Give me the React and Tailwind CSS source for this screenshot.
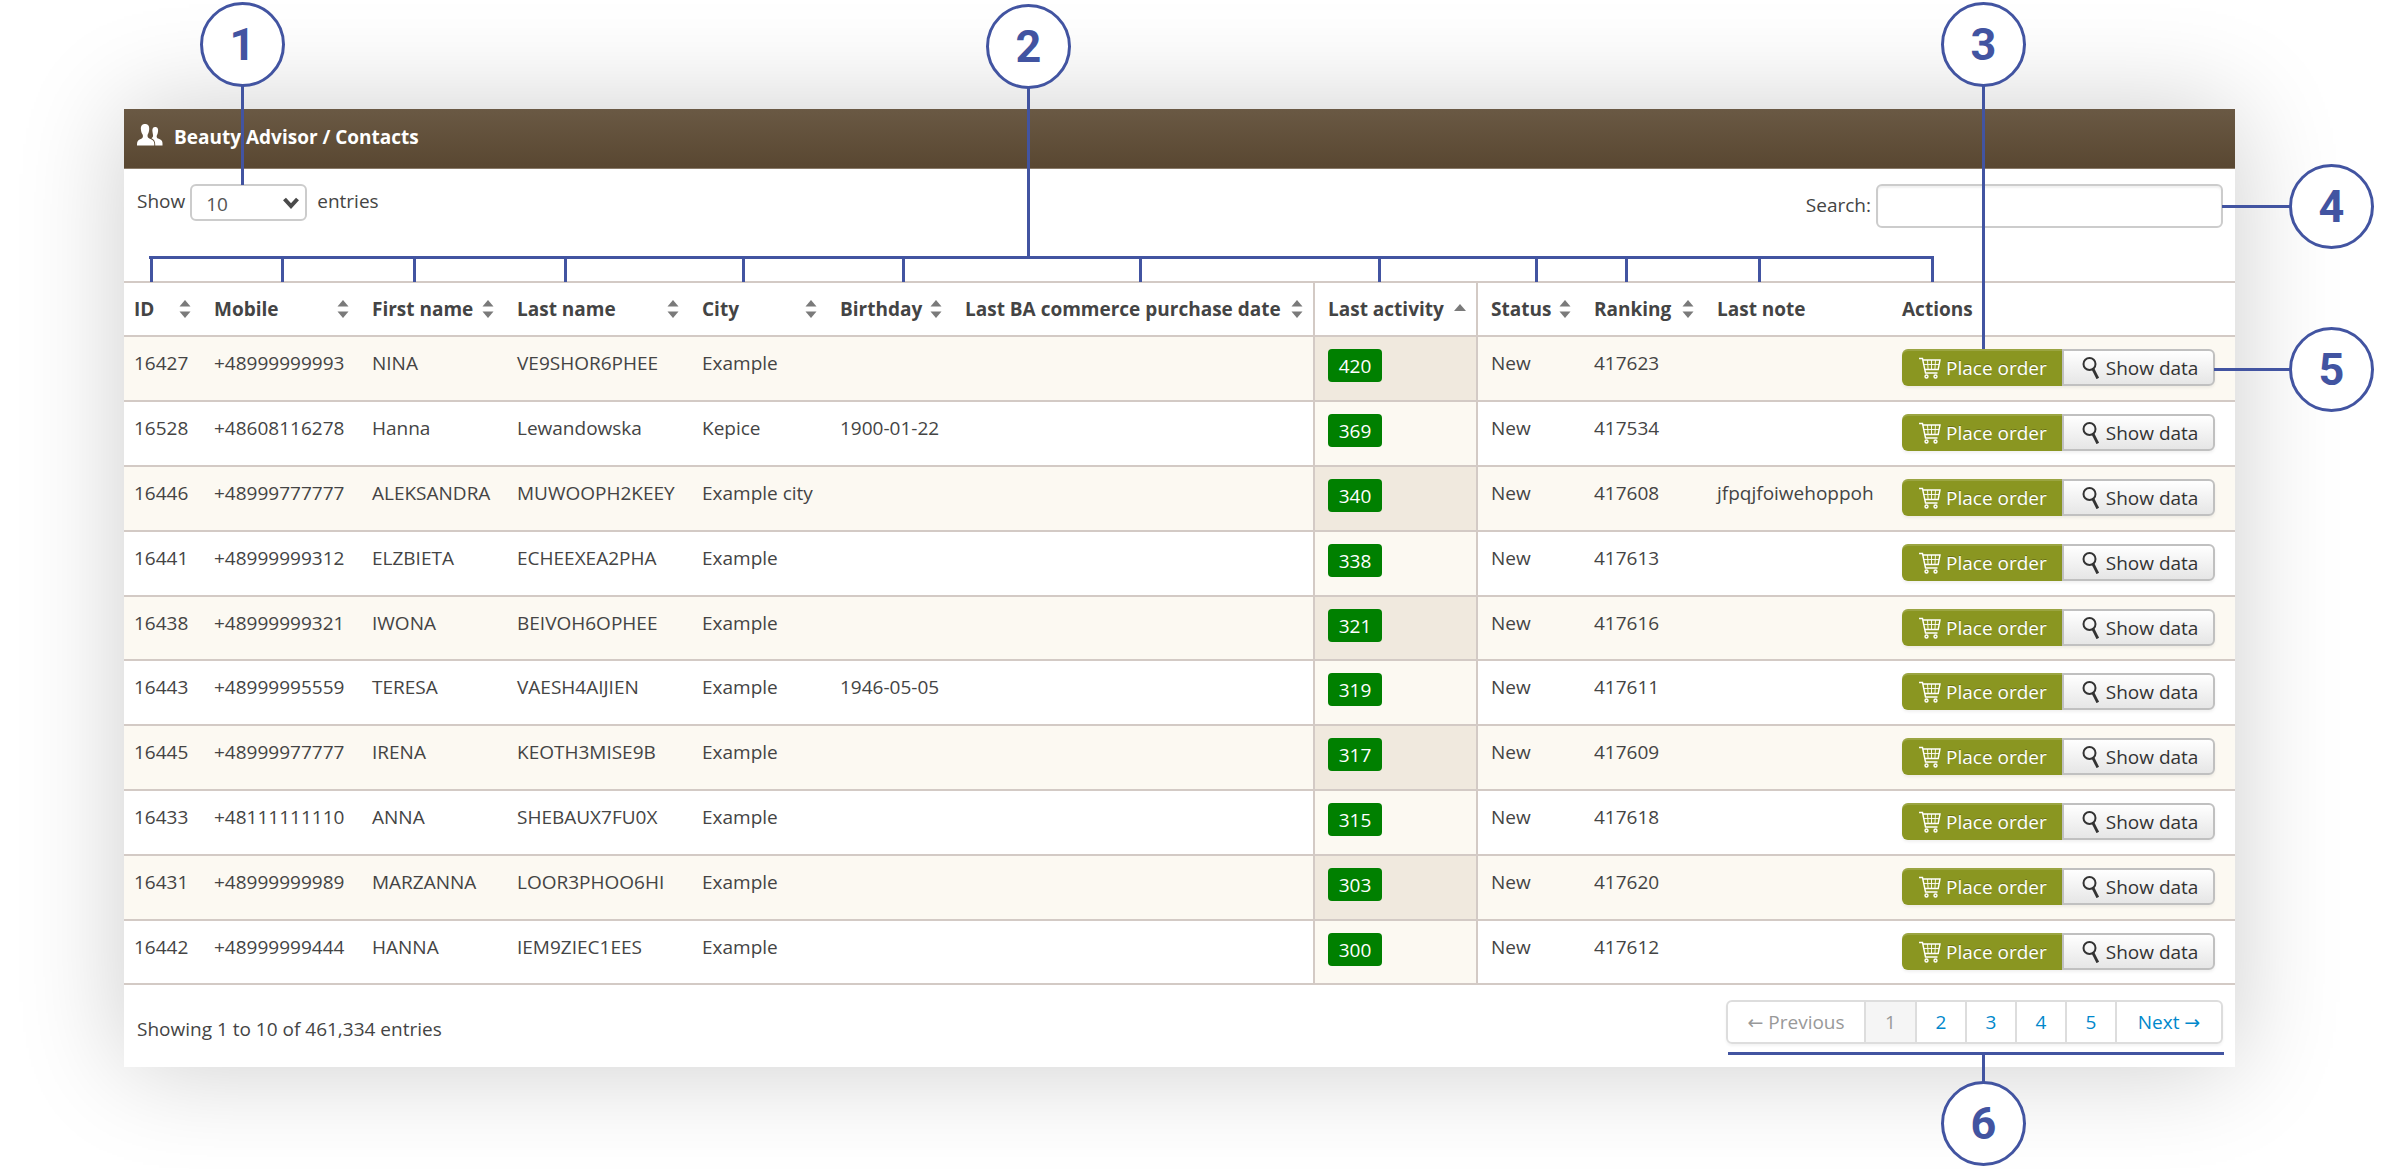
const columns = [
  { key: "id", label: "ID", width: "w-[77px]", sort: "both" },
  { key: "mobile", label: "Mobile", width: "w-[158px]", sort: "both" },
  { key: "firstName", label: "First name", width: "w-[145px]", sort: "both" },
  { key: "lastName", label: "Last name", width: "w-[185px]", sort: "both" },
  { key: "city", label: "City", width: "w-[138px]", sort: "both" },
  { key: "birthday", label: "Birthday", width: "w-[125px]", sort: "both" },
  { key: "purchase", label: "Last BA commerce purchase date", width: "w-[361px]", sort: "both" },
  { key: "activity", label: "Last activity", width: "w-[165px]", sort: "up" },
  { key: "status", label: "Status", width: "w-[103px]", sort: "both" },
  { key: "ranking", label: "Ranking", width: "w-[123px]", sort: "both" },
  { key: "note", label: "Last note", width: "w-[185px]" },
  { key: "actions", label: "Actions", width: "w-[346px]" },
];

const contacts = [
  { id: "16427", mobile: "+48999999993", firstName: "NINA", lastName: "VE9SHOR6PHEE", city: "Example", activity: 420, status: "New", ranking: "417623" },
  { id: "16528", mobile: "+48608116278", firstName: "Hanna", lastName: "Lewandowska", city: "Kepice", birthday: "1900-01-22", activity: 369, status: "New", ranking: "417534" },
  { id: "16446", mobile: "+48999777777", firstName: "ALEKSANDRA", lastName: "MUWOOPH2KEEY", city: "Example city", activity: 340, status: "New", ranking: "417608", note: "jfpqjfoiwehoppoh" },
  { id: "16441", mobile: "+48999999312", firstName: "ELZBIETA", lastName: "ECHEEXEA2PHA", city: "Example", activity: 338, status: "New", ranking: "417613" },
  { id: "16438", mobile: "+48999999321", firstName: "IWONA", lastName: "BEIVOH6OPHEE", city: "Example", activity: 321, status: "New", ranking: "417616" },
  { id: "16443", mobile: "+48999995559", firstName: "TERESA", lastName: "VAESH4AIJIEN", city: "Example", birthday: "1946-05-05", activity: 319, status: "New", ranking: "417611" },
  { id: "16445", mobile: "+48999977777", firstName: "IRENA", lastName: "KEOTH3MISE9B", city: "Example", activity: 317, status: "New", ranking: "417609" },
  { id: "16433", mobile: "+48111111110", firstName: "ANNA", lastName: "SHEBAUX7FU0X", city: "Example", activity: 315, status: "New", ranking: "417618" },
  { id: "16431", mobile: "+48999999989", firstName: "MARZANNA", lastName: "LOOR3PHOO6HI", city: "Example", activity: 303, status: "New", ranking: "417620" },
  { id: "16442", mobile: "+48999999444", firstName: "HANNA", lastName: "IEM9ZIEC1EES", city: "Example", activity: 300, status: "New", ranking: "417612" },
];

const PeopleIcon = () => (
  <svg viewBox="0 0 26 22" className="w-[26px] h-[22px] mb-1" fill="#fff" aria-hidden="true">
    <path d="M15.500 8c-.6-3 .2-5 2.700-5 2.600 0 3.300 2.200 2.800 4.800-.1 1.500-.6 2.700-1.200 3.600-.4 1.300 0 2.600 1.400 3.200 2.600 1.100 4.300 1.700 4.300 4.900v2h-7.300v-1.200c0-3.200-1.200-4.800-3.700-6 1.300-1.200 1.800-1.800 1.500-3.200z" />
    <path d="M8 0c3.200 0 4.500 2.200 4.200 5.300-.1 2.200-.7 4-1.500 5.300-.5 1.900 0 3.300 1.600 4 3.300 1.200 5 2.200 5 5.400v1.500H0V20c0-3.200 1.800-4.200 4.300-5.300 1.700-.8 2-2.300 1.300-4.100C4.700 9.300 4 7.500 3.900 5.300 3.600 2.200 4.900 0 8 0z" />
  </svg>
);

const CartIcon = () => (
  <svg viewBox="0 0 22 22" className="w-[22px] h-[22px] shrink-0" fill="none" stroke="#fff" aria-hidden="true">
    <path d="M0 1.500h3.500L6.500 16h12M4.200 3h16.800l-1.800 9.500H6" strokeWidth="1.400" />
    <path d="M8.500 3l.6 9.500M12.500 3v9.500M16.500 3l-.6 9.500M5 7.500h15" strokeWidth=".9" />
    <circle cx="7.500" cy="19.500" r="1.500" strokeWidth="1.400" />
    <circle cx="16.500" cy="19.500" r="1.500" strokeWidth="1.400" />
  </svg>
);

const SearchIcon = () => (
  <svg viewBox="0 0 18 22" className="w-[18px] h-[22px] shrink-0" fill="none" stroke="#333" aria-hidden="true">
    <circle cx="7.500" cy="7" r="6" strokeWidth="2" />
    <path d="M11 12l4.800 9.500" strokeWidth="2.800" />
  </svg>
);

const SortIcon = ({ direction }) => (
  <svg viewBox="0 0 12 18" className="w-3 h-[18px] shrink-0" fill="#7a7a7a" aria-hidden="true">
    {direction === "up" ? (
      <path d="M6 4l6 7H0z" />
    ) : (
      <>
        <path d="M6 0l5.500 6.500H.5z" />
        <path d="M6 18l5.500-6.500H.5z" />
      </>
    )}
  </svg>
);

const Toolbar = () => (
  <div className="flex justify-between items-start pt-[15px] pl-[13px] pr-3 h-28">
    <div className="flex items-start">
      <label htmlFor="page-size" className="leading-[34px]">Show</label>
      <div className="relative ml-[5px] mr-2.5">
        <select
          id="page-size"
          defaultValue="10"
          className="appearance-none w-[117px] h-[37px] pl-3.5 pt-1 rounded-md border-2 border-[#ccc] bg-white text-[#555]"
        >
          <option>10</option>
          <option>25</option>
          <option>50</option>
        </select>
        <svg viewBox="0 0 16 12" className="absolute right-2 top-[13px] w-4 h-3 pointer-events-none" fill="none" stroke="#4a4a4a" strokeWidth="4" aria-hidden="true">
          <path d="M1.500 2L8 9l6.500-7" />
        </svg>
      </div>
      <label htmlFor="page-size" className="leading-[34px]">entries</label>
    </div>
    <div className="flex items-start">
      <label htmlFor="search" className="mr-[5px] leading-[42px]">Search:</label>
      <input
        id="search"
        type="text"
        className="w-[347px] h-11 px-2 rounded-md border-2 border-[#ccc] bg-white shadow-[inset_0_2px_2px_rgba(0,0,0,0.06)]"
      />
    </div>
  </div>
);

const RowActions = () => (
  <div className="flex text-[#333]">
    <button
      type="button"
      className="flex items-center gap-[5px] h-[37px] pl-[17px] pr-[15px] rounded-l-md bg-[#8a9621] text-white whitespace-nowrap [text-shadow:0_-1px_0_rgba(0,0,0,0.25)] shadow-[inset_0_2px_0_rgba(255,255,255,0.15),0_2px_3px_rgba(0,0,0,0.06)]"
    >
      <CartIcon />
      Place order
    </button>
    <button
      type="button"
      className="flex items-center gap-1.5 h-[37px] pl-[18px] pr-[15px] rounded-r-md border-2 border-[#c0c0c0] bg-linear-to-b from-white to-[#e6e6e6] whitespace-nowrap shadow-[0_2px_3px_rgba(0,0,0,0.06)]"
    >
      <SearchIcon />
      Show data
    </button>
  </div>
);

const cellContent = (contact, key) => {
  if (key === "actions") return <RowActions />;
  if (key === "activity") {
    return (
      <span className="block w-[54px] h-[33px] rounded-[4px] bg-[#008000] text-white text-center leading-[34px]">
        {contact.activity}
      </span>
    );
  }
  return contact[key];
};

const ContactsTable = () => (
  <table className="w-full table-fixed border-separate border-spacing-0">
    <thead>
      <tr className="h-14">
        {columns.map(({ key, label, width, sort }) => (
          <th
            key={key}
            scope="col"
            className={`${width} p-0 pl-[13px] pr-2.5 first:pl-2.5 border-y-2 border-[#d3cac5] text-left font-bold whitespace-nowrap ${key === "activity" ? "border-x-2" : ""}`}
          >
            <span className="flex items-center justify-between">
              {label}
              {sort && <SortIcon direction={sort} />}
            </span>
          </th>
        ))}
      </tr>
    </thead>
    <tbody>
      {contacts.map((contact) => (
        <tr key={contact.id} className="group h-[65px] nth-[5n]:h-16 odd:bg-[#fcf9f2]">
          {columns.map(({ key }) => (
            <td
              key={key}
              className={`p-0 pt-3 pl-[13px] first:pl-2.5 border-b-2 border-[#d3cac5] align-top leading-7 whitespace-nowrap ${
                key === "activity" ? "border-x-2 bg-[#fcf9f2] group-odd:bg-[#f0e9de]" : ""
              }`}
            >
              {cellContent(contact, key)}
            </td>
          ))}
        </tr>
      ))}
    </tbody>
  </table>
);

const Arrow = ({ children }) => <span className="font-['DejaVu_Sans',sans-serif]">{children}</span>;

const Pagination = () => (
  <nav aria-label="Pages" className="flex h-11 rounded-md border-2 border-[#ddd] divide-x-2 divide-[#ddd] overflow-hidden text-[#0088cc] leading-10 text-center shadow-[0_2px_3px_rgba(0,0,0,0.05)]">
    <button type="button" disabled className="w-[138px] text-[#999]">
      <Arrow>←</Arrow> Previous
    </button>
    <button type="button" disabled className="w-[51px] bg-[#f5f5f5] text-[#999]">1</button>
    {["2", "3", "4", "5"].map((page) => (
      <a key={page} href={`#page-${page}`} className="w-[50px]">{page}</a>
    ))}
    <a href="#page-2" className="w-[104px]">
      Next <Arrow>→</Arrow>
    </a>
  </nav>
);

const Marker = ({ number, place }) => (
  <div
    className={`absolute ${place} flex items-center justify-center size-[85px] rounded-full border-3 border-[#4254a1] bg-white text-[#4254a1] font-[Roboto,sans-serif] font-bold text-[45px] leading-none`}
  >
    {number}
  </div>
);

const Line = ({ place }) => <div className={`absolute ${place} bg-[#4254a1]`} />;

const tickPlaces = [
  "left-[150px]",
  "left-[281px]",
  "left-[413px]",
  "left-[564px]",
  "left-[742px]",
  "left-[902px]",
  "left-[1139px]",
  "left-[1378px]",
  "left-[1535px]",
  "left-[1625px]",
  "left-[1758px]",
  "left-[1931px]",
];

const Callouts = () => (
  <div className="absolute inset-0 pointer-events-none">
    <Line place="left-[241px] top-[86px] w-[3px] h-[99px]" />
    <Marker number={1} place="left-[200px] top-[2px]" />

    <Line place="left-[1027px] top-[88px] w-[3px] h-[168px]" />
    <Line place="left-[149px] top-[256px] w-[1785px] h-[3px]" />
    {tickPlaces.map((place) => (
      <Line key={place} place={`${place} top-[256px] w-[3px] h-[26px]`} />
    ))}
    <Marker number={2} place="left-[986px] top-[4px]" />

    <Line place="right-[397px] top-[86px] w-[3px] h-[263px]" />
    <Marker number={3} place="right-[356px] top-[2px]" />

    <Line place="right-[92px] top-[205px] w-[68px] h-[3px]" />
    <Marker number={4} place="right-[8px] top-[164px]" />

    <Line place="right-[92px] top-[368px] w-[76px] h-[3px]" />
    <Marker number={5} place="right-[8px] top-[327px]" />

    <Line place="right-[158px] top-[1052px] w-[496px] h-[3px]" />
    <Line place="right-[397px] top-[1055px] w-[3px] h-[27px]" />
    <Marker number={6} place="right-[356px] top-[1081px]" />
  </div>
);

const App = () => (
  <div className="relative pt-[109px] pb-[103px] pl-[124px] pr-[147px] bg-white overflow-hidden font-['Open_Sans',sans-serif] text-[19px] text-[#444]">
    <main className="bg-white shadow-[0_0_100px_rgba(0,0,0,0.2)]">
      <header className="flex items-center gap-[11px] h-[60px] pb-[3px] pl-[13px] border-b border-[#8a7b69] bg-linear-to-b from-[#6a5944] to-[#594731] text-white">
        <PeopleIcon />
        <h1 className="font-bold">Beauty Advisor / Contacts</h1>
      </header>
      <Toolbar />
      <ContactsTable />
      <div className="flex justify-between items-start pt-[15px] pb-[23px] pl-[13px] pr-3">
        <p className="pt-3.5 leading-[30px]">Showing 1 to 10 of 461,334 entries</p>
        <Pagination />
      </div>
    </main>
    <Callouts />
  </div>
);

export default App;
